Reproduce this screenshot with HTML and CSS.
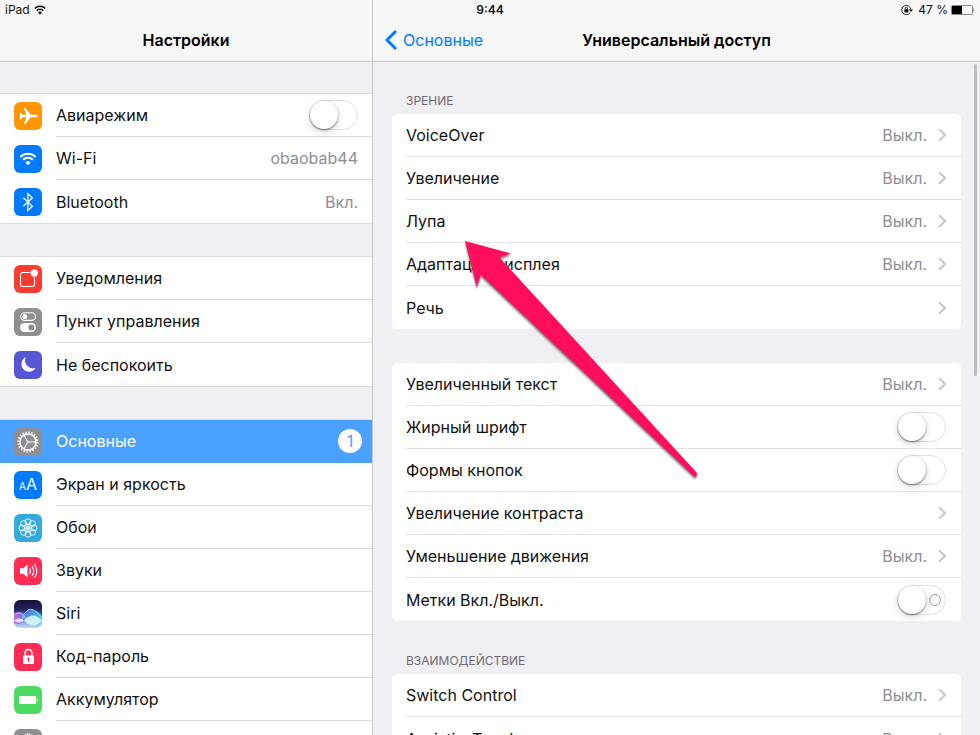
FILE: index.html
```
<!DOCTYPE html>
<html lang="ru">
<head>
    <meta charset="UTF-8">
    <meta name="viewport" content="width=device-width, initial-scale=1.0">
    <title>Универсальный доступ</title>
    <link rel="stylesheet" href="styles.css">
</head>
<body>

<!-- Строка состояния -->
<div class="status-bar">
    <div class="status-left">
        <span>iPad</span>
        <svg width="12" height="10" viewBox="0 0 12 10" fill="none" stroke="#111" stroke-width="1.5">
            <path d="M.7 3.5a7.5 7.5 0 0 1 10.6 0M2.6 5.6a4.8 4.8 0 0 1 6.800 0"/>
            <path d="M6 9.600 4 7.500a2.800 2.800 0 0 1 4 0z" fill="#111" stroke="none"/>
        </svg>
    </div>
    <div class="status-time">9:44</div>
    <div class="status-right">
        <svg width="12" height="12" viewBox="0 0 12 12" fill="none" stroke="#111">
            <path d="M9.200 8.500A4.600 4.600 0 1 1 9.900 5.500" stroke-width=".9"/>
            <path d="M8 5.500h4L10 8z" fill="#111" stroke="none"/>
            <rect x="3.400" y="5.200" width="4" height="3.200" fill="#111" stroke="none"/>
            <path d="M4.300 5.500V4.400a1.100 1.100 0 0 1 2.200 0v1.100" stroke-width=".9"/>
        </svg>
        <span class="percent">47 %</span>
        <svg width="24" height="10" viewBox="0 0 24 10">
            <rect x=".5" y=".5" width="21" height="9" rx="1" fill="none" stroke="#888"/>
            <rect x="1" y="1" width="10" height="8" fill="#000"/>
            <path d="M22.500 3.200c1 .3 1 3.300 0 3.600z" fill="#555"/>
        </svg>
    </div>
</div>

<div class="split">
    <!-- Список разделов -->
    <nav class="sidebar">
        <header class="navbar">
            <h2>Настройки</h2>
        </header>
        <div class="scroll">
            <div class="group">
                <label class="item">
                    <svg class="icon" viewBox="0 0 28 28"><rect width="28" height="28" rx="6" fill="#ff9500"/><path d="M23.500 14c0-.8-.8-1.200-2-1.200h-4.700L11.400 6H9.700l2.800 6.800H8.300l-1.500-2.300H5.900V17.500h.9l1.500-2.300h4.200L9.700 22h1.700l5.400-6.800h4.700c1.200 0 2-.4 2-1.200z" fill="#fff"/></svg>
                    <span class="item-body"><span class="name">Авиарежим</span><input class="switch" type="checkbox"></span>
                </label>
                <a class="item" href="#wifi">
                    <svg class="icon" viewBox="0 0 28 28"><rect width="28" height="28" rx="6" fill="#007aff"/><path d="M6.400 12a10.800 10.800 0 0 1 15.200 0M9.200 14.800a6.800 6.800 0 0 1 9.600 0" fill="none" stroke="#fff" stroke-width="2"/><path d="M14 20.300l-2.700-2.800a3.800 3.800 0 0 1 5.400 0z" fill="#fff"/></svg>
                    <span class="item-body"><span class="name">Wi-Fi</span><span class="value">obaobab44</span></span>
                </a>
                <a class="item" href="#bluetooth">
                    <svg class="icon" viewBox="0 0 28 28"><rect width="28" height="28" rx="6" fill="#007aff"/><path d="M9.300 9.800l9 8.400-4.400 4.200V5.700l4.400 4.200-9 8.300" fill="none" stroke="#fff" stroke-width="1.300"/></svg>
                    <span class="item-body"><span class="name">Bluetooth</span><span class="value">Вкл.</span></span>
                </a>
            </div>

            <div class="group">
                <a class="item" href="#notifications">
                    <svg class="icon" viewBox="0 0 28 28"><rect width="28" height="28" rx="6" fill="#ff3b30"/><rect x="6.500" y="7.500" width="14" height="14" rx="2" fill="none" stroke="#fff" stroke-width="1.100"/><circle cx="20.200" cy="8" r="4.600" fill="#ff3b30"/><circle cx="20.200" cy="8" r="3.700" fill="#fff"/></svg>
                    <span class="item-body"><span class="name">Уведомления</span></span>
                </a>
                <a class="item" href="#control-center">
                    <svg class="icon" viewBox="0 0 28 28"><rect width="28" height="28" rx="6" fill="#8e8e93"/><rect x="6.700" y="4.800" width="14.800" height="7.600" rx="3.800" fill="none" stroke="#fff" stroke-width="1.100"/><circle cx="10.800" cy="8.600" r="2.500" fill="#fff"/><rect x="6" y="15" width="16" height="9" rx="4.500" fill="#fff"/><circle cx="17.400" cy="19.500" r="3" fill="#8e8e93"/></svg>
                    <span class="item-body"><span class="name">Пункт управления</span></span>
                </a>
                <a class="item" href="#do-not-disturb">
                    <svg class="icon" viewBox="0 0 28 28"><rect width="28" height="28" rx="6" fill="#5856d6"/><path d="M11.700 6.300a8 8 0 0 0 9.900 10.700A7.600 7.600 0 1 1 11.700 6.300z" fill="#fff"/></svg>
                    <span class="item-body"><span class="name">Не беспокоить</span></span>
                </a>
            </div>

            <div class="group">
                <a class="item active" href="#general">
                    <svg class="icon" viewBox="0 0 28 28"><rect width="28" height="28" rx="6" fill="#8e8e93"/><g fill="none" stroke="#fff"><circle cx="14" cy="14" r="9.500" stroke-width="2.200" stroke-dasharray="1.400 1.584"/><circle cx="14" cy="14" r="8" stroke-width="1.500"/><circle cx="14" cy="14" r="1" stroke-width=".8"/><path d="M15 14h7M13.500 13.200l-3.600-6.100M13.500 14.800l-3.600 6.100" stroke-width="1.100"/></g></svg>
                    <span class="item-body"><span class="name">Основные</span><span class="badge">1</span></span>
                </a>
                <a class="item" href="#display">
                    <svg class="icon" viewBox="0 0 28 28"><rect width="28" height="28" rx="6" fill="#007aff"/><text x="5" y="19" class="aa-small">A</text><text x="12" y="19" class="aa-big">A</text></svg>
                    <span class="item-body"><span class="name">Экран и яркость</span></span>
                </a>
                <a class="item" href="#wallpaper">
                    <svg class="icon" viewBox="0 0 28 28"><rect width="28" height="28" rx="6" fill="#34aadc"/><g fill="none" stroke="#fff" stroke-width=".9"><circle cx="14" cy="7.800" r="2.900"/><circle cx="18.400" cy="9.600" r="2.900"/><circle cx="20.200" cy="14" r="2.900"/><circle cx="18.400" cy="18.400" r="2.900"/><circle cx="14" cy="20.200" r="2.900"/><circle cx="9.600" cy="18.400" r="2.900"/><circle cx="7.800" cy="14" r="2.900"/><circle cx="9.600" cy="9.600" r="2.900"/><circle cx="14" cy="14" r="4"/><path d="M14 10v8M10 14h8M11.200 11.200l5.600 5.600M16.800 11.200l-5.600 5.600"/></g><circle cx="14" cy="14" r="1.500" fill="#fff"/></svg>
                    <span class="item-body"><span class="name">Обои</span></span>
                </a>
                <a class="item" href="#sounds">
                    <svg class="icon" viewBox="0 0 28 28"><rect width="28" height="28" rx="6" fill="#ff2d55"/><path d="M6 11.300h3l4.500-3.500v12.400L9 16.700H6z" fill="#fff"/><path d="M15.500 11.200q2 2.800 0 5.600M18 9.300q3.400 4.700 0 9.400M20.400 7.500q4.800 6.500 0 13" fill="none" stroke="#fff" stroke-width="1.200"/></svg>
                    <span class="item-body"><span class="name">Звуки</span></span>
                </a>
                <a class="item" href="#siri">
                    <svg class="icon" viewBox="0 0 28 28">
                        <defs>
                            <linearGradient id="siri-bg" x1="0" y1="0" x2="0" y2="1"><stop offset="0" stop-color="#15113c"/><stop offset=".35" stop-color="#25245e"/><stop offset=".6" stop-color="#4d7fd0"/><stop offset="1" stop-color="#c6d6fa"/></linearGradient>
                            <linearGradient id="siri-wave" x1="0" y1="0" x2="1" y2="0"><stop offset="0" stop-color="#e25be0"/><stop offset=".5" stop-color="#5f86f2"/><stop offset="1" stop-color="#35dcd4"/></linearGradient>
                            <clipPath id="siri-clip"><rect width="28" height="28" rx="6"/></clipPath>
                        </defs>
                        <g clip-path="url(#siri-clip)">
                            <rect width="28" height="28" fill="url(#siri-bg)"/>
                            <path d="M0 14c5-4 8-2 11 1 3-8 11-7 17 1v6c-7 6-12 4-17-2-4 4-7 5-11 3z" fill="url(#siri-wave)" opacity=".85"/>
                            <path d="M0 15c6-4 9-1 13 5s9 7 15 2M8 20c4-14 12-14 20-1" fill="none" stroke="#79e0f0" stroke-width="1"/>
                            <path d="M0 20.500q5-4 10 0-5 4-10 0zM10 20.500q9-10 18 0-9 10-18 0z" fill="#d8fbff" opacity=".9"/>
                        </g>
                    </svg>
                    <span class="item-body"><span class="name">Siri</span></span>
                </a>
                <a class="item" href="#passcode">
                    <svg class="icon" viewBox="0 0 28 28"><rect width="28" height="28" rx="6" fill="#ff2d55"/><rect x="9" y="12.500" width="11" height="8.500" rx="1" fill="#fff"/><path d="M11 13v-3.200a3.400 3.400 0 0 1 6.800 0V13" fill="none" stroke="#fff" stroke-width="1.500"/><path d="M14.400 14.600a1.100 1.100 0 0 1 .5 2.100v2.200h-1v-2.200a1.100 1.100 0 0 1 .5-2.100z" fill="#ff2d55"/></svg>
                    <span class="item-body"><span class="name">Код-пароль</span></span>
                </a>
                <a class="item" href="#battery">
                    <svg class="icon" viewBox="0 0 28 28"><rect width="28" height="28" rx="6" fill="#4cd964"/><rect x="5" y="10" width="17" height="8" rx="1" fill="#fff"/><path d="M22.800 12.300c1.400.4 1.400 3 0 3.400z" fill="#fff"/></svg>
                    <span class="item-body"><span class="name">Аккумулятор</span></span>
                </a>
                <a class="item" href="#privacy">
                    <svg class="icon" viewBox="0 0 28 28"><rect width="28" height="28" rx="6" fill="#8e8e93"/><path d="M11 15V6M13.200 14V5M15.400 14V5M17.600 15V6M8.500 13l4 7h5l2-6" fill="none" stroke="#fff" stroke-width="1.500" stroke-linecap="round"/></svg>
                    <span class="item-body"></span>
                </a>
            </div>
        </div>
    </nav>

    <!-- Универсальный доступ -->
    <main class="detail">
        <header class="navbar">
            <a class="back" href="#general">
                <svg width="12" height="20" viewBox="0 0 12 20" fill="none" stroke="#007aff" stroke-width="3"><path d="M11 1 2 10l9 9"/></svg>
                <span>Основные</span>
            </a>
            <h1>Универсальный доступ</h1>
        </header>
        <div class="scroll">
            <h3>Зрение</h3>
            <div class="card">
                <a class="row" href="#voiceover"><span class="name">VoiceOver</span><span class="value">Выкл.</span><svg class="chevron" viewBox="0 0 8 12"><path d="M1 0l6 6-6 6"/></svg></a>
                <a class="row" href="#zoom"><span class="name">Увеличение</span><span class="value">Выкл.</span><svg class="chevron" viewBox="0 0 8 12"><path d="M1 0l6 6-6 6"/></svg></a>
                <a class="row" href="#magnifier"><span class="name">Лупа</span><span class="value">Выкл.</span><svg class="chevron" viewBox="0 0 8 12"><path d="M1 0l6 6-6 6"/></svg></a>
                <a class="row" href="#display-accommodations"><span class="name">Адаптация дисплея</span><span class="value">Выкл.</span><svg class="chevron" viewBox="0 0 8 12"><path d="M1 0l6 6-6 6"/></svg></a>
                <a class="row" href="#speech"><span class="name">Речь</span><svg class="chevron" viewBox="0 0 8 12"><path d="M1 0l6 6-6 6"/></svg></a>
            </div>

            <div class="card">
                <a class="row" href="#larger-text"><span class="name">Увеличенный текст</span><span class="value">Выкл.</span><svg class="chevron" viewBox="0 0 8 12"><path d="M1 0l6 6-6 6"/></svg></a>
                <label class="row"><span class="name">Жирный шрифт</span><input class="switch" type="checkbox"></label>
                <label class="row"><span class="name">Формы кнопок</span><input class="switch" type="checkbox"></label>
                <a class="row" href="#contrast"><span class="name">Увеличение контраста</span><svg class="chevron" viewBox="0 0 8 12"><path d="M1 0l6 6-6 6"/></svg></a>
                <a class="row" href="#motion"><span class="name">Уменьшение движения</span><span class="value">Выкл.</span><svg class="chevron" viewBox="0 0 8 12"><path d="M1 0l6 6-6 6"/></svg></a>
                <label class="row"><span class="name">Метки Вкл./Выкл.</span><input class="switch marked" type="checkbox"></label>
            </div>

            <h3>Взаимодействие</h3>
            <div class="card">
                <a class="row" href="#switch-control"><span class="name">Switch Control</span><span class="value">Выкл.</span><svg class="chevron" viewBox="0 0 8 12"><path d="M1 0l6 6-6 6"/></svg></a>
                <a class="row" href="#assistive-touch"><span class="name">AssistiveTouch</span><span class="value">Выкл.</span><svg class="chevron" viewBox="0 0 8 12"><path d="M1 0l6 6-6 6"/></svg></a>
            </div>
        </div>
        <div class="scroll-thumb"></div>
    </main>
</div>

<!-- Стрелка-указатель на пункт «Лупа» -->
<svg class="pointer" width="240" height="244" viewBox="0 0 240 244">
    <path d="M5 1 51 13.500 39.500 17.500 236.500 232.500q1.500 3.500-2 4.500L20.700 35 16.700 47z" fill="#ff0f5b"/>
</svg>

</body>
</html>
```

FILE: styles.css
```
* {
    box-sizing: border-box;
}

body {
    margin: 0;
    font-family: Inter, "Liberation Sans", Arial, sans-serif;
    font-size: 16px;
    color: #111;
    background-color: #efeff4;
    overflow: hidden;
}

a {
    color: inherit;
    text-decoration: none;
}

/* status bar */
.status-bar {
    position: absolute;
    top: 0;
    left: 0;
    right: 0;
    z-index: 2;
    height: 19px;
    padding: 0 5px;
    display: grid;
    grid-template-columns: 1fr auto 1fr;
    align-items: center;
    font-size: 12px;
}

.status-left,
.status-right {
    display: flex;
    align-items: center;
    gap: 4px;
}

.status-right {
    justify-content: flex-end;
    gap: 3px;
}

.percent {
    margin-left: 2px;
}

.status-time {
    font-weight: 600;
}

/* layout */
.split {
    display: flex;
    height: 100vh;
}

.sidebar,
.detail {
    display: flex;
    flex-direction: column;
    min-width: 0;
}

.sidebar {
    flex: 0 0 373px;
    border-right: 1px solid #c8c7cc;
}

.detail {
    flex: 1;
    position: relative;
}

.navbar {
    flex: none;
    display: grid;
    grid-template-columns: 1fr auto 1fr;
    align-items: center;
    height: 62px;
    padding: 18px 12px 0;
    background-color: #f7f7f8;
    border-bottom: 1px solid #c8c7cc;
}

.navbar h1,
.navbar h2 {
    grid-column: 2;
    margin: 0;
    font-size: 16px;
    font-weight: 600;
    color: #000;
}

.back {
    display: flex;
    align-items: center;
    gap: 6px;
    color: #007aff;
}

.scroll {
    flex: 1;
    min-height: 0;
    overflow-y: auto;
    scrollbar-width: none;
}

.scroll-thumb {
    position: absolute;
    top: 64px;
    right: 3px;
    width: 3px;
    height: 312px;
    border-radius: 2px;
    background-color: #bcbcc1;
}

/* sidebar list */
.group {
    margin-top: 32px;
    background-color: #fff;
    box-shadow: 0 0 0 1px #dedee2;
}

.group + .group {
    margin-top: 34px;
}

.item {
    display: flex;
    align-items: center;
    gap: 14px;
    height: 43px;
    padding-left: 14px;
}

.item-body {
    flex: 1;
    display: flex;
    align-items: center;
    align-self: stretch;
    padding-right: 14px;
    border-bottom: 1px solid #d9d9dc;
}

.item:last-child .item-body {
    border-bottom: none;
}

.icon {
    flex: none;
    width: 28px;
    height: 28px;
}

.aa-small,
.aa-big {
    fill: #fff;
    font-size: 10px;
}

.aa-big {
    font-size: 16px;
}

.name {
    flex: 1;
    white-space: nowrap;
}

.value {
    color: #8e8e93;
}

.active {
    color: #fff;
    background-color: #4ba1ff;
}

.active .item-body {
    padding-right: 10px;
    border-color: #4ba1ff;
}

.badge {
    width: 24px;
    height: 24px;
    border-radius: 12px;
    background-color: #fff;
    color: #4ba1ff;
    line-height: 24px;
    text-align: center;
}

/* detail cards */
h3 {
    margin: 0;
    padding: 30px 33px 5px;
    font-size: 12px;
    line-height: 17px;
    font-weight: 400;
    text-transform: uppercase;
    color: #6d6d72;
}

.card {
    margin: 0 19px;
    background-color: #fff;
    border-radius: 5px;
}

.card + .card {
    margin-top: 34px;
}

.card + h3 {
    padding-top: 31px;
}

.row {
    display: flex;
    align-items: center;
    height: 43px;
    margin-left: 14px;
    padding-right: 15px;
    border-bottom: 1px solid #e2e2e5;
}

.row:last-child {
    border-bottom: none;
}

.chevron {
    width: 8px;
    height: 12px;
    margin-left: 11px;
    fill: none;
    stroke: #c7c7cc;
    stroke-width: 2;
}

/* switches */
.switch {
    appearance: none;
    display: flex;
    align-items: center;
    width: 49px;
    height: 30px;
    margin: 0;
    border: 1px solid #e0e0e0;
    border-radius: 15px;
    background-color: #fff;
}

.switch::before {
    content: "";
    width: 28px;
    height: 28px;
    border-radius: 50%;
    background-color: #fff;
    box-shadow: 0 1px 2px rgba(0, 0, 0, 0.5), 0 3px 8px rgba(0, 0, 0, 0.15);
}

.marked::after {
    content: "";
    width: 10px;
    height: 10px;
    margin-left: 3px;
    border: 1px solid #999;
    border-radius: 50%;
}

.switch:checked {
    background-color: #4cd964;
    justify-content: flex-end;
}

.pointer {
    position: absolute;
    top: 240px;
    left: 460px;
    z-index: 3;
    pointer-events: none;
    overflow: visible;
    filter: drop-shadow(0 2px 1px rgba(0, 0, 0, 0.5));
}
```
